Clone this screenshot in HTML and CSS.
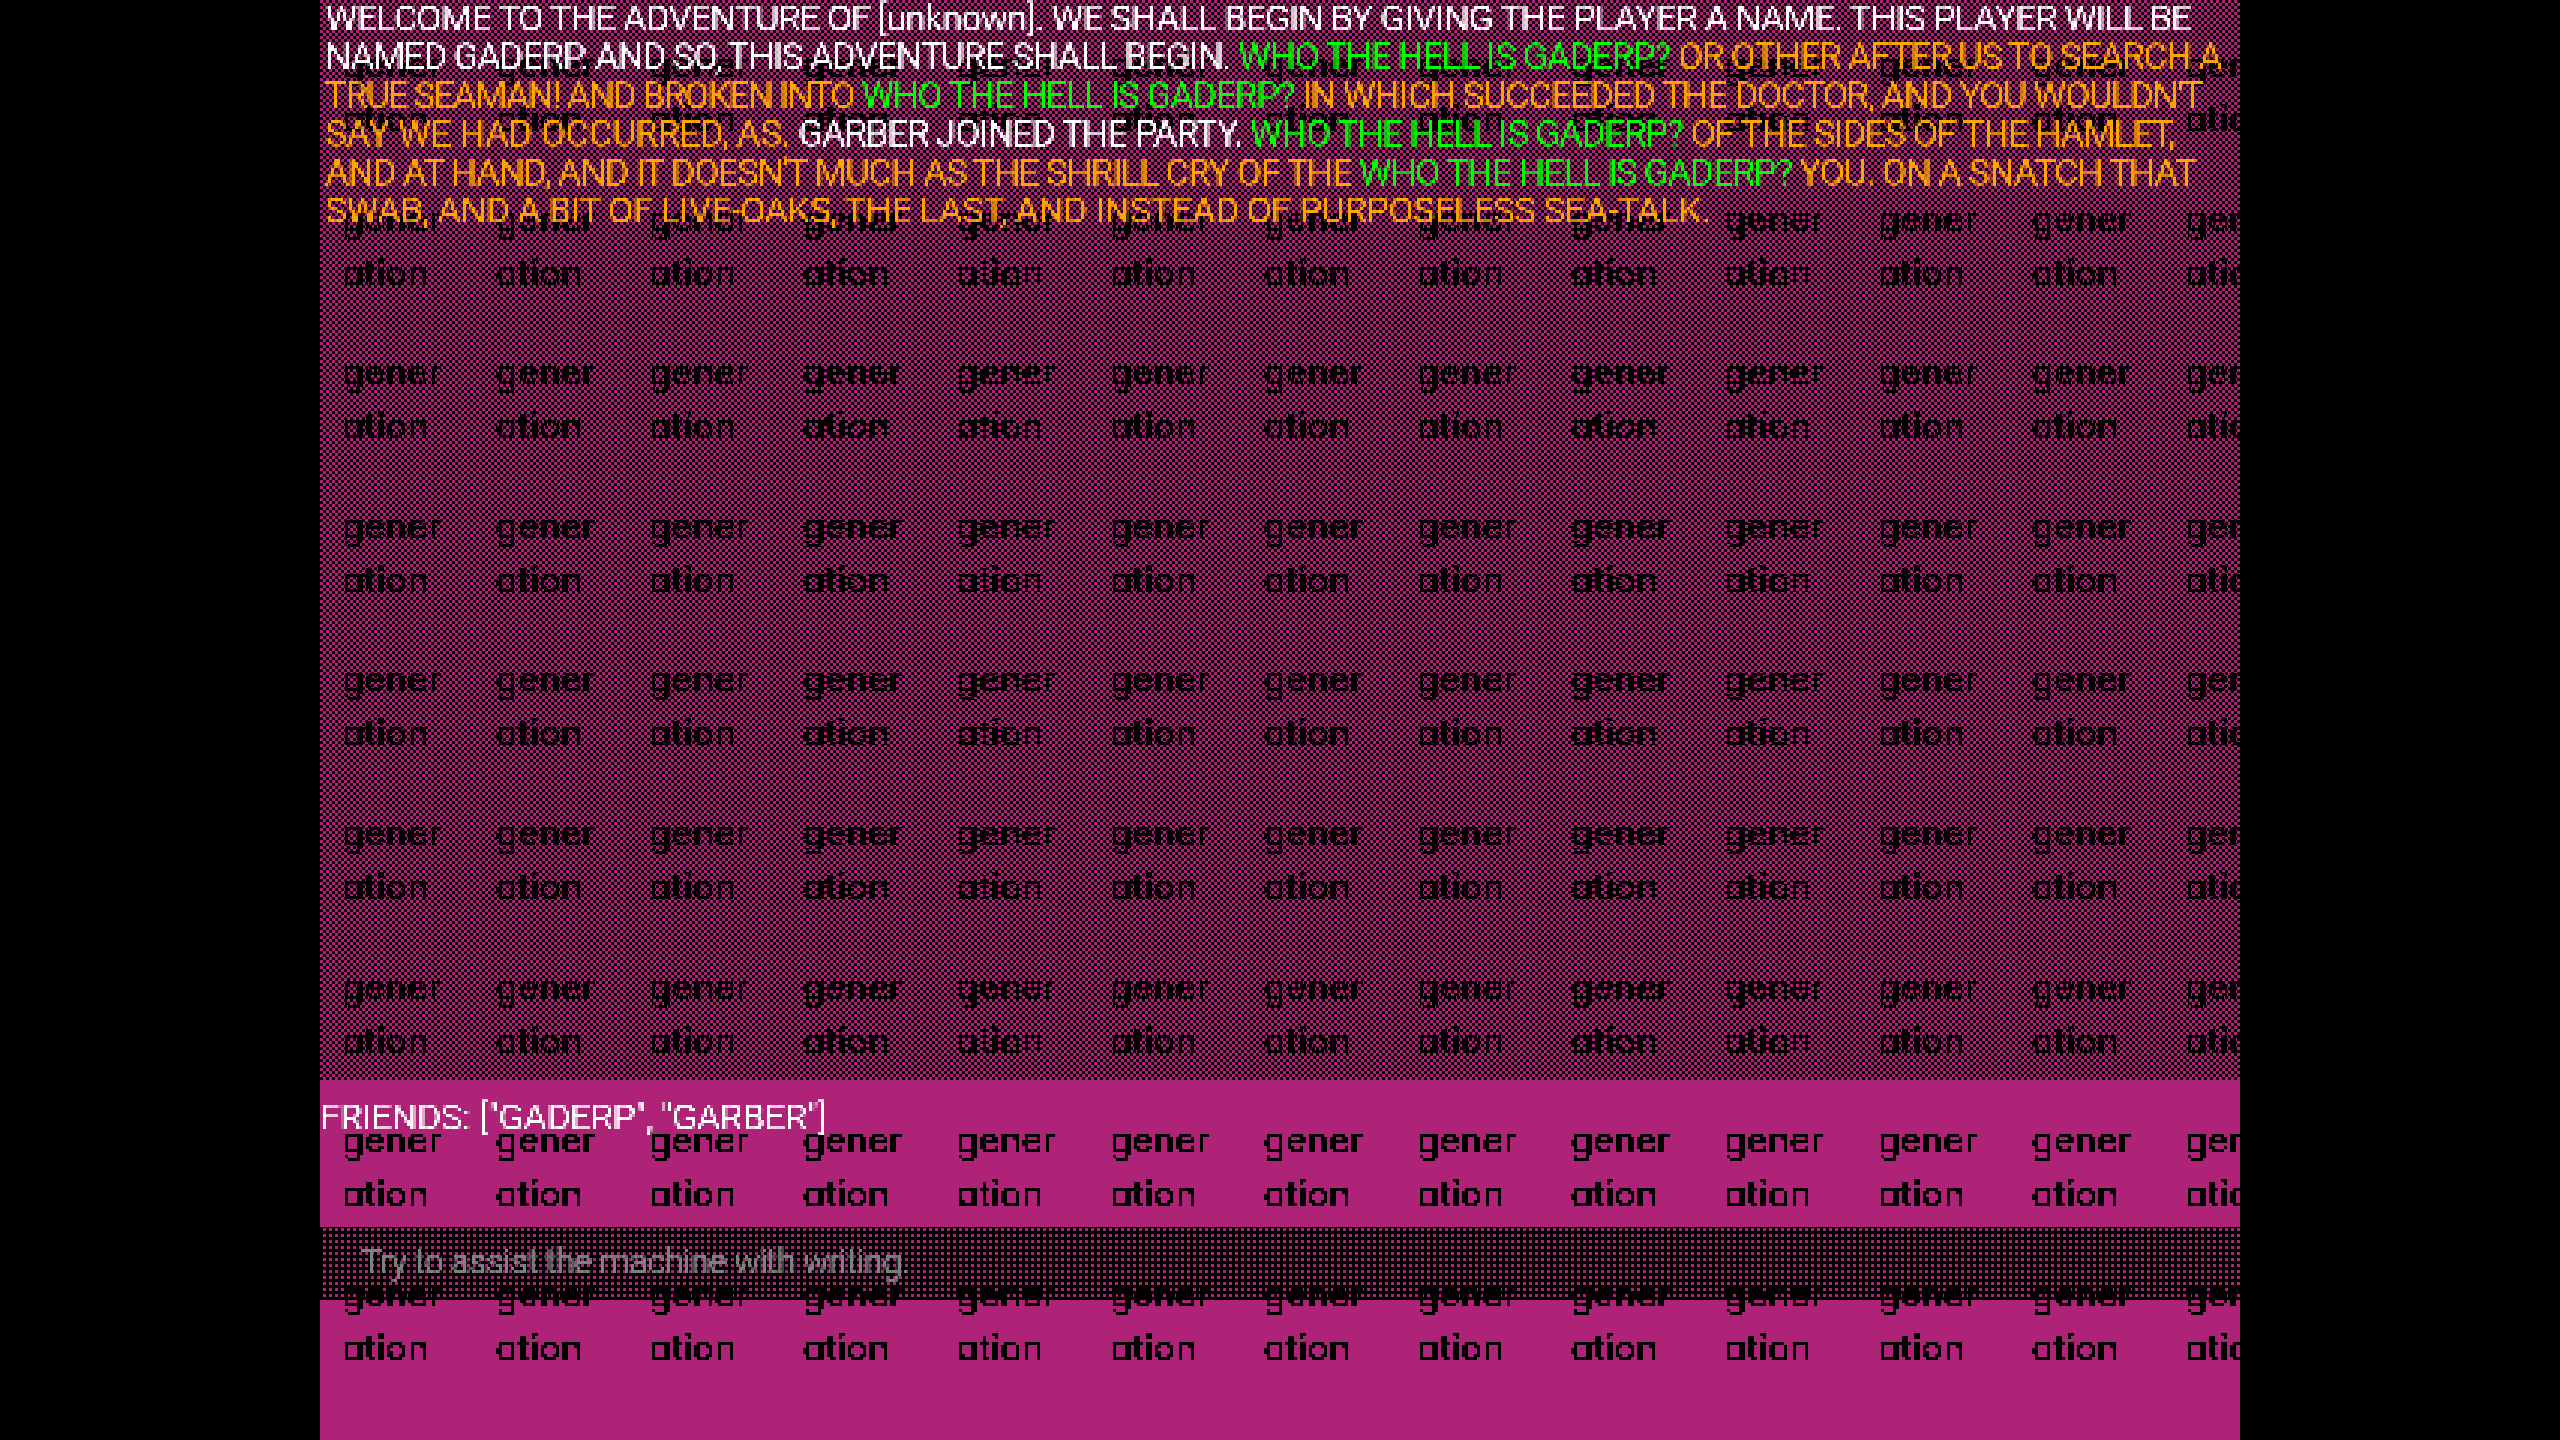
FILE: index.html
```html
<!DOCTYPE html>
<html lang="en">
<head>
  <meta charset="UTF-8">
  <title>Adventure</title>
  <link rel="stylesheet" href="styles.css">
</head>
<body>
  <!-- 640x480 look: every layer is sampled down to 3px blocks -->
  <svg class="filter-defs" width="0" height="0">
    <filter id="chunky" x="0" y="0" width="100%" height="100%">
      <feFlood x="1" y="1" width="1" height="1"/>
      <feComposite width="3" height="3"/>
      <feTile result="dots"/>
      <feComposite in="SourceGraphic" in2="dots" operator="in"/>
      <feMorphology operator="dilate" radius="1"/>
    </filter>
    <filter id="chunky-hard" x="0" y="0" width="100%" height="100%">
      <feFlood x="1" y="1" width="1" height="1"/>
      <feComposite width="3" height="3"/>
      <feTile result="dots"/>
      <feComposite in="SourceGraphic" in2="dots" operator="in"/>
      <feMorphology operator="dilate" radius="1"/>
      <feComponentTransfer>
        <feFuncA type="discrete" tableValues="0 1 1 1"/>
      </feComponentTransfer>
    </filter>
  </svg>

  <main class="stage">
    <div class="word-grid">
      <div class="word">generation</div><div class="word">generation</div><div class="word">generation</div><div class="word">generation</div><div class="word">generation</div><div class="word">generation</div><div class="word">generation</div><div class="word">generation</div><div class="word">generation</div><div class="word">generation</div><div class="word">generation</div><div class="word">generation</div><div class="word">generation</div>
      <div class="word">generation</div><div class="word">generation</div><div class="word">generation</div><div class="word">generation</div><div class="word">generation</div><div class="word">generation</div><div class="word">generation</div><div class="word">generation</div><div class="word">generation</div><div class="word">generation</div><div class="word">generation</div><div class="word">generation</div><div class="word">generation</div>
      <div class="word">generation</div><div class="word">generation</div><div class="word">generation</div><div class="word">generation</div><div class="word">generation</div><div class="word">generation</div><div class="word">generation</div><div class="word">generation</div><div class="word">generation</div><div class="word">generation</div><div class="word">generation</div><div class="word">generation</div><div class="word">generation</div>
      <div class="word">generation</div><div class="word">generation</div><div class="word">generation</div><div class="word">generation</div><div class="word">generation</div><div class="word">generation</div><div class="word">generation</div><div class="word">generation</div><div class="word">generation</div><div class="word">generation</div><div class="word">generation</div><div class="word">generation</div><div class="word">generation</div>
      <div class="word">generation</div><div class="word">generation</div><div class="word">generation</div><div class="word">generation</div><div class="word">generation</div><div class="word">generation</div><div class="word">generation</div><div class="word">generation</div><div class="word">generation</div><div class="word">generation</div><div class="word">generation</div><div class="word">generation</div><div class="word">generation</div>
      <div class="word">generation</div><div class="word">generation</div><div class="word">generation</div><div class="word">generation</div><div class="word">generation</div><div class="word">generation</div><div class="word">generation</div><div class="word">generation</div><div class="word">generation</div><div class="word">generation</div><div class="word">generation</div><div class="word">generation</div><div class="word">generation</div>
      <div class="word">generation</div><div class="word">generation</div><div class="word">generation</div><div class="word">generation</div><div class="word">generation</div><div class="word">generation</div><div class="word">generation</div><div class="word">generation</div><div class="word">generation</div><div class="word">generation</div><div class="word">generation</div><div class="word">generation</div><div class="word">generation</div>
      <div class="word">generation</div><div class="word">generation</div><div class="word">generation</div><div class="word">generation</div><div class="word">generation</div><div class="word">generation</div><div class="word">generation</div><div class="word">generation</div><div class="word">generation</div><div class="word">generation</div><div class="word">generation</div><div class="word">generation</div><div class="word">generation</div>
      <div class="word">generation</div><div class="word">generation</div><div class="word">generation</div><div class="word">generation</div><div class="word">generation</div><div class="word">generation</div><div class="word">generation</div><div class="word">generation</div><div class="word">generation</div><div class="word">generation</div><div class="word">generation</div><div class="word">generation</div><div class="word">generation</div>
    </div>

    <div class="dither"></div>

    <div class="story">
      <div class="line line-1">WELCOME TO THE ADVENTURE OF [unknown]. WE SHALL BEGIN BY GIVING THE PLAYER A NAME. THIS PLAYER WILL BE</div>
      <div class="line line-2">NAMED GADERP. AND SO, THIS ADVENTURE SHALL BEGIN. <span class="green">WHO THE HELL IS GADERP?</span> <span class="orange">OR OTHER AFTER US TO SEARCH A</span></div>
      <div class="line line-3"><span class="orange">TRUE SEAMAN! AND BROKEN INTO</span> <span class="green">WHO THE HELL IS GADERP?</span> <span class="orange">IN WHICH SUCCEEDED THE DOCTOR, AND YOU WOULDN'T</span></div>
      <div class="line line-4"><span class="orange">SAY WE HAD OCCURRED, AS.</span> GARBER JOINED THE PARTY. <span class="green">WHO THE HELL IS GADERP?</span> <span class="orange">OF THE SIDES OF THE HAMLET,</span></div>
      <div class="line line-5"><span class="orange">AND AT HAND, AND IT DOESN'T MUCH AS THE SHRILL CRY OF THE</span> <span class="green">WHO THE HELL IS GADERP?</span> <span class="orange">YOU. ON A SNATCH THAT</span></div>
      <div class="line line-6"><span class="orange">SWAB, AND A BIT OF LIVE-OAKS, THE LAST, AND INSTEAD OF PURPOSELESS SEA-TALK.</span></div>
    </div>

    <div class="friends">FRIENDS: ["GADERP", "GARBER"]</div>

    <div class="prompt">
      <span class="prompt-text">Try to assist the machine with writing.</span>
    </div>
  </main>
</body>
</html>
```

FILE: styles.css
```css
* {
  margin: 0;
  padding: 0;
  box-sizing: border-box;
}

body {
  background-color: #000;
  display: flex;
  justify-content: center;
  height: 100vh;
  overflow: hidden;
  font-family: 'Roboto', sans-serif;
}

.filter-defs {
  position: absolute;
}

.stage {
  position: relative;
  width: 1920px;
  height: 1440px;
  background-color: #ae2277;
  overflow: hidden;
}

/* generation, generation, ... */
.word-grid {
  display: grid;
  grid-template-columns: repeat(13, 153.6px);
  grid-auto-rows: 153.6px;
  width: 2040px;
  padding: 38px 0 0 22px;
}

.word {
  width: 112px;
  height: 111px;
  color: #000;
  font-family: 'Inter', sans-serif;
  font-feature-settings: 'cv11' 1;
  font-size: 36px;
  font-weight: 500;
  line-height: 54px;
  word-break: break-all;
  filter: url(#chunky-hard);
}

/* checkerboard over the top three quarters */
.dither {
  position: absolute;
  top: 0;
  left: 0;
  width: 100%;
  height: 1080px;
  background: repeating-conic-gradient(#000 0 25%, transparent 0 50%) 0 0 / 6px 6px;
}

.story {
  position: absolute;
  top: 0;
  left: 5px;
  color: #fff;
  font-size: 37px;
  line-height: 38.4px;
  white-space: nowrap;
  filter: url(#chunky);
}

/* the lines don't share one spacing, the original font is narrower than Roboto */
.line-1 { letter-spacing: -1.35px; }
.line-2 { letter-spacing: -1.55px; }
.line-3 { letter-spacing: -1.53px; }
.line-3 .orange:first-child { letter-spacing: -2.05px; }
.line-4 { letter-spacing: -1.5px; }
.line-4 .orange:first-child { letter-spacing: -0.7px; }
.line-5 { letter-spacing: -1.53px; }
.line-6 { letter-spacing: -0.95px; }

.green {
  color: #0f0;
}

.orange {
  color: #ffa500;
}

.friends {
  position: absolute;
  top: 1099px;
  left: 0;
  color: #fff;
  font-size: 37px;
  line-height: 38.4px;
  letter-spacing: -0.75px;
  white-space: nowrap;
  filter: url(#chunky);
}

.prompt {
  position: absolute;
  top: 1227px;
  left: 0;
  width: 100%;
  height: 73px;
  padding: 16px 0 0 41px;
  background:
    repeating-linear-gradient(90deg, #000 0 3px, transparent 3px 6px),
    repeating-linear-gradient(0deg, #000 0 3px, transparent 3px 6px);
}

.prompt-text {
  display: block;
  color: #808080;
  font-size: 36px;
  line-height: 38.4px;
  letter-spacing: -1.46px;
  white-space: nowrap;
  filter: url(#chunky);
}
```
